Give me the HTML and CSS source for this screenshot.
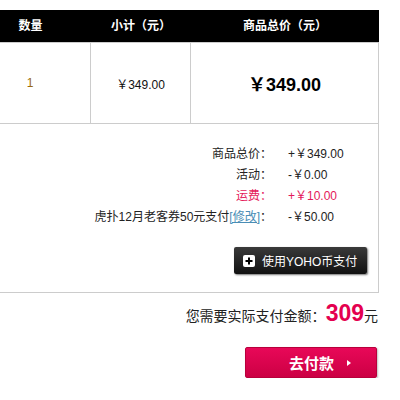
FILE: index.html
```html
<!DOCTYPE html>
<html>
	<head>
		<meta charset="UTF-8">
		<title>购物车结算</title>
		<link rel="stylesheet" href="styles.css">
	</head>
	<body>
		<div class="cart">
			<div class="cart-head">
				<span>数量</span>
				<span>小计（元）</span>
				<span>商品总价（元）</span>
			</div>
			<div class="cart-row">
				<div class="cell qty">1</div>
				<div class="cell sub">￥349.00</div>
				<div class="cell total">￥349.00</div>
			</div>
			<div class="summary">
				<dl class="fees">
					<dt>商品总价：</dt><dd>+￥349.00</dd>
					<dt>活动：</dt><dd>-￥0.00</dd>
					<dt class="red">运费：</dt><dd class="red">+￥10.00</dd>
					<dt>虎扑12月老客券50元支付<a href="javascript:">[修改]</a>：</dt><dd>-￥50.00</dd>
				</dl>
				<div class="coin-line">
					<a href="javascript:" class="coin-btn">
						<svg width="12" height="12" viewBox="0 0 12 12"><rect width="12" height="12" rx="2" fill="#fff"/><path d="M6 2.5v7M2.5 6h7" stroke="#000" stroke-width="2"/></svg>
						使用YOHO币支付
					</a>
				</div>
			</div>
		</div>
		<div class="pay-total">您需要实际支付金额：<strong>309</strong>元</div>
		<div class="pay-line">
			<a href="javascript:" class="pay-btn">去付款<i></i></a>
		</div>
	</body>
</html>
```

FILE: styles.css
```css
body{ margin: 0; font: 12px "Liberation Sans", "Noto Sans CJK SC", sans-serif; color: #222; }
a{ text-decoration: none; }

.cart{ width: 409px; margin: 10px 0 0 -30px; }
.cart-head{ display: grid; grid-template-columns: 121px 100px 188px; height: 32px; line-height: 32px; background: #000; color: #fff; font-weight: bold; text-align: center; }
.cart-row{ display: grid; grid-template-columns: 121px 100px 188px; border-top: 1px solid #ccc; border-bottom: 1px solid #ccc; }
.cell{ height: 80px; display: flex; align-items: center; justify-content: center; border-right: 1px solid #ccc; }
.qty{ color: #9a6a10; }
.sub{ color: #111; }
.total{ font-size: 18px; font-weight: bold; color: #000; }

.summary{ border-right: 1px solid #ccc; border-bottom: 1px solid #ccc; padding: 20px 0 18px; }
.fees{ display: grid; grid-template-columns: auto 90px; justify-content: end; margin: 0; line-height: 21px; color: #222; }
.fees dt{ text-align: right; padding-right: 16px; }
.fees dd{ margin: 0; }
.fees a{ color: #4a8db5; text-decoration: underline; }
.fees .red{ color: #e4185a; }

.coin-line{ display: flex; justify-content: flex-end; margin: 19px 11px 0 0; }
.coin-btn{ display: flex; align-items: center; gap: 7px; width: 133px; height: 27px; box-sizing: border-box; padding-left: 9px; background: linear-gradient(#3a3a3a, #111); border-radius: 2px; box-shadow: 1px 1px 2px rgba(0,0,0,.55); color: #fff; font-size: 12px; }

.pay-total{ width: 378px; margin-top: 7px; line-height: 26px; text-align: right; font-size: 14px; color: #222; }
.pay-total strong{ font-size: 23px; color: #e4004f; }
.pay-line{ width: 377px; display: flex; justify-content: flex-end; margin-top: 18px; }
.pay-btn{ display: flex; align-items: center; justify-content: center; gap: 13px; width: 132px; height: 31px; box-sizing: border-box; padding-left: 18px; background: linear-gradient(#e80858, #cc0044); border: 1px solid #b8003c; border-radius: 2px; box-shadow: 1px 1px 2px rgba(0,0,0,.25); color: #fff; font-size: 15px; font-weight: bold; }
.pay-btn i{ width: 0; height: 0; border-left: 4px solid #fff; border-top: 3.5px solid transparent; border-bottom: 3.5px solid transparent; }
```
